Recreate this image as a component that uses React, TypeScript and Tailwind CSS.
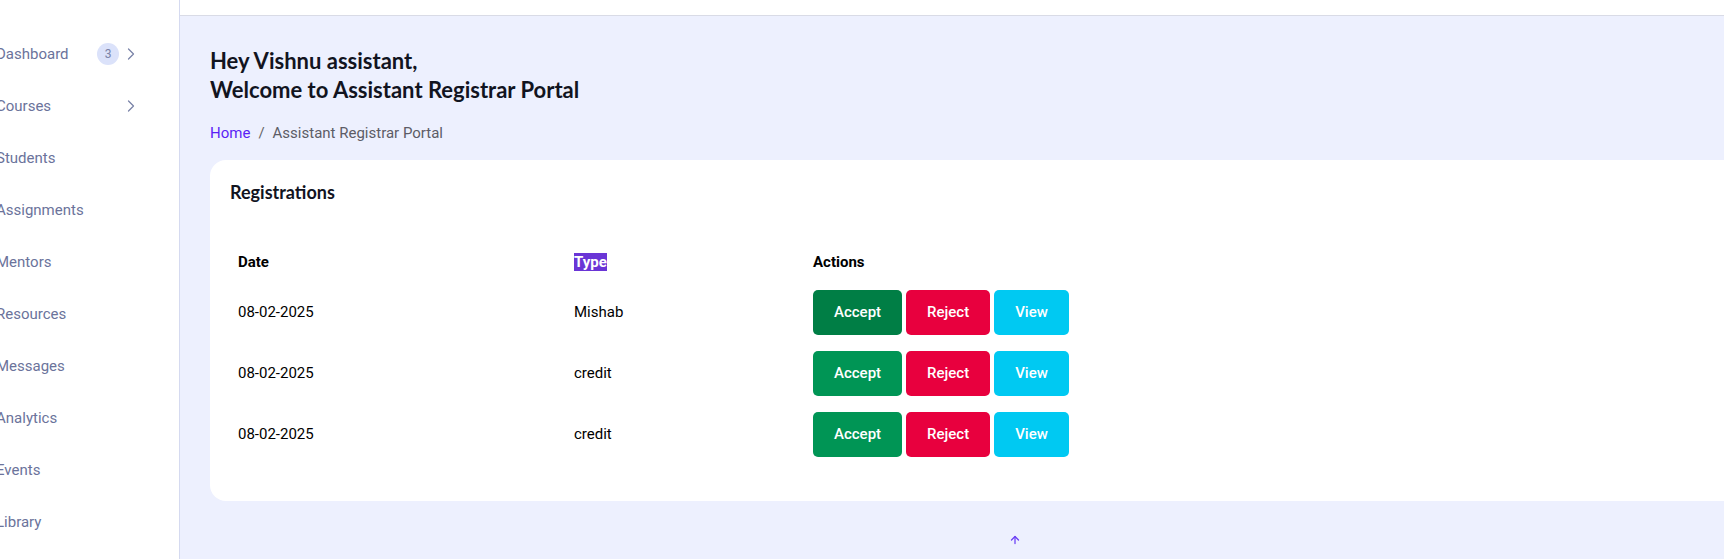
import { ArrowUp, ChevronRight } from "lucide-react";

const navItems = [
  { label: "Dashboard", badge: "3", chevron: true },
  { label: "Courses", chevron: true },
  { label: "Students" },
  { label: "Assignments" },
  { label: "Mentors" },
  { label: "Resources" },
  { label: "Messages" },
  { label: "Analytics" },
  { label: "Events" },
  { label: "Library" },
];

const rows = [
  { date: "08-02-2025", type: "Mishab", active: true },
  { date: "08-02-2025", type: "credit" },
  { date: "08-02-2025", type: "credit" },
];

function Sidebar() {
  return (
    <aside className="h-full w-[180px] shrink-0 overflow-hidden border-r border-[#d5daf0] bg-white pt-[28px]">
      {navItems.map((item) => (
        <div
          key={item.label}
          className="flex h-[52px] items-center pr-[38px] text-[15px] leading-[22px] text-[#6b739b]"
        >
          <span className="ml-[-4px] flex-1">{item.label}</span>
          <div className="flex items-center gap-[2px]">
            {item.badge && (
              <span className="flex h-[22px] w-[22px] items-center justify-center rounded-full bg-[#dbe2fa] text-[12px] text-[#7a83a8]">
                {item.badge}
              </span>
            )}
            {item.chevron && (
              <ChevronRight size={20} strokeWidth={1.5} className="text-[#7a83a8]" />
            )}
          </div>
        </div>
      ))}
    </aside>
  );
}

function Btn({ label, className }: { label: string; className: string }) {
  return (
    <button
      className={`h-[45px] rounded-[5px] px-[21px] text-[15px] font-medium text-white ${className}`}
    >
      {label}
    </button>
  );
}

export default function App() {
  return (
    <div
      className="flex h-[559px] w-full overflow-hidden bg-[#edf0fe]"
      style={{ fontFamily: "Roboto, sans-serif" }}
    >
      <Sidebar />

      <main className="flex min-w-0 flex-1 flex-col overflow-hidden">
        {/* top bar */}
        <div className="h-[16px] shrink-0 border-b border-[#d9dbe6] bg-white" />

        <div className="w-[1639px] shrink-0 pl-[30px] pt-[30px]">
          <h1
            className="text-[22px] font-bold leading-[29px] text-[#12141f]"
            style={{ fontFamily: "Lato, sans-serif" }}
          >
            Hey Vishnu assistant,
            <br />
            Welcome to Assistant Registrar Portal
          </h1>

          <nav className="mt-[18px] flex items-center text-[15px] leading-[22px]">
            <span className="text-[#5b1ff5]">Home</span>
            <span className="px-[8px] text-[#666]">/</span>
            <span className="text-[#5c5c66]">Assistant Registrar Portal</span>
          </nav>

          {/* card */}
          <section className="mt-[16px] rounded-2xl bg-white p-5">
            <h2
              className="text-[18px] font-bold leading-6 text-[#12141f]"
              style={{ fontFamily: "Lato, sans-serif" }}
            >
              Registrations
            </h2>

            <table className="mb-4 mt-[39px] w-full border-collapse text-left text-black">
              <thead>
                <tr className="text-[15px] font-bold">
                  <th className="w-[336px] px-2 py-2 leading-[23px]">Date</th>
                  <th className="w-[239px] px-2 py-2 leading-[23px]">
                    <span className="bg-[#6a35d6] text-white">Type</span>
                  </th>
                  <th className="px-2 py-2 leading-[23px]">Actions</th>
                </tr>
              </thead>
              <tbody className="text-[15px]">
                {rows.map((r, i) => (
                  <tr key={i}>
                    <td className="px-2 py-2">{r.date}</td>
                    <td className="px-2 py-2">{r.type}</td>
                    <td className="px-2 py-2">
                      <div className="flex gap-1">
                        <Btn
                          label="Accept"
                          className={r.active ? "bg-[#007e45]" : "bg-[#009555]"}
                        />
                        <Btn label="Reject" className="bg-[#e8003e]" />
                        <Btn label="View" className="bg-[#00c9f2]" />
                      </div>
                    </td>
                  </tr>
                ))}
              </tbody>
            </table>
          </section>

          <div className="mt-[33px] flex justify-center">
            <ArrowUp size={12} strokeWidth={2.5} className="text-[#6a3df5]" />
          </div>
        </div>
      </main>
    </div>
  );
}
